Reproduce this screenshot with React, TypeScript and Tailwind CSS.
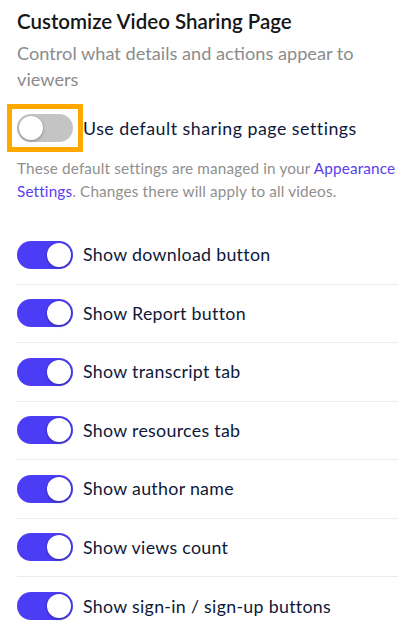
import React from "react";

function Toggle({ on }: { on: boolean }) {
  return (
    <div
      className={
        "relative w-[56px] h-[28px] rounded-full shrink-0 " +
        (on ? "bg-[#4b3cf5]" : "bg-[#c4c4c4]")
      }
    >
      <div
        className={
          "absolute top-[2px] w-[24px] h-[24px] rounded-full bg-white shadow-[0_1px_3px_rgba(0,0,0,0.35)] " +
          (on ? "left-[30px]" : "left-[2px]")
        }
      />
    </div>
  );
}

const rows = [
  "Show download button",
  "Show Report button",
  "Show transcript tab",
  "Show resources tab",
  "Show author name",
  "Show views count",
  "Show sign-in / sign-up buttons",
];

export default function App() {
  return (
    <div className="w-[405px] h-[621px] overflow-hidden bg-white pl-[17px] pr-[7px] pt-[9px] font-['Lato',sans-serif]">
      <h2 className="text-[20.5px] leading-[24px] font-semibold text-[#161616]">
        Customize Video Sharing Page
      </h2>
      <p className="mt-[7px] text-[18.2px] leading-[26px] text-[#8c8c8c]">
        Control what details and actions appear to viewers
      </p>
      <div className="mt-[22px] flex items-center h-[28px] gap-[10px]">
        <div className="outline-[5px] outline-solid outline-[#ffa800] outline-offset-[5px] rounded-none">
          <Toggle on={false} />
        </div>
        <span className="text-[17.8px] text-[#0e1838] tracking-[0.5px]">
          Use default sharing page settings
        </span>
      </div>
      <p className="mt-[14.5px] text-[15.3px] leading-[23px] text-[#8f8f8f] tracking-[0.15px]">
        These default settings are managed in your{" "}
        <span className="text-[#5a3ef0]">Appearance Settings</span>. Changes
        there will apply to all videos.
      </p>
      <div className="mt-[23.5px]">
        {rows.map((r) => (
          <div
            key={r}
            className="h-[58.5px] flex items-center gap-[10px] border-b border-[#ececec] last:border-b-0"
          >
            <Toggle on={true} />
            <span className="text-[17.8px] text-[#0e1838] tracking-[0.3px]">{r}</span>
          </div>
        ))}
      </div>
    </div>
  );
}
